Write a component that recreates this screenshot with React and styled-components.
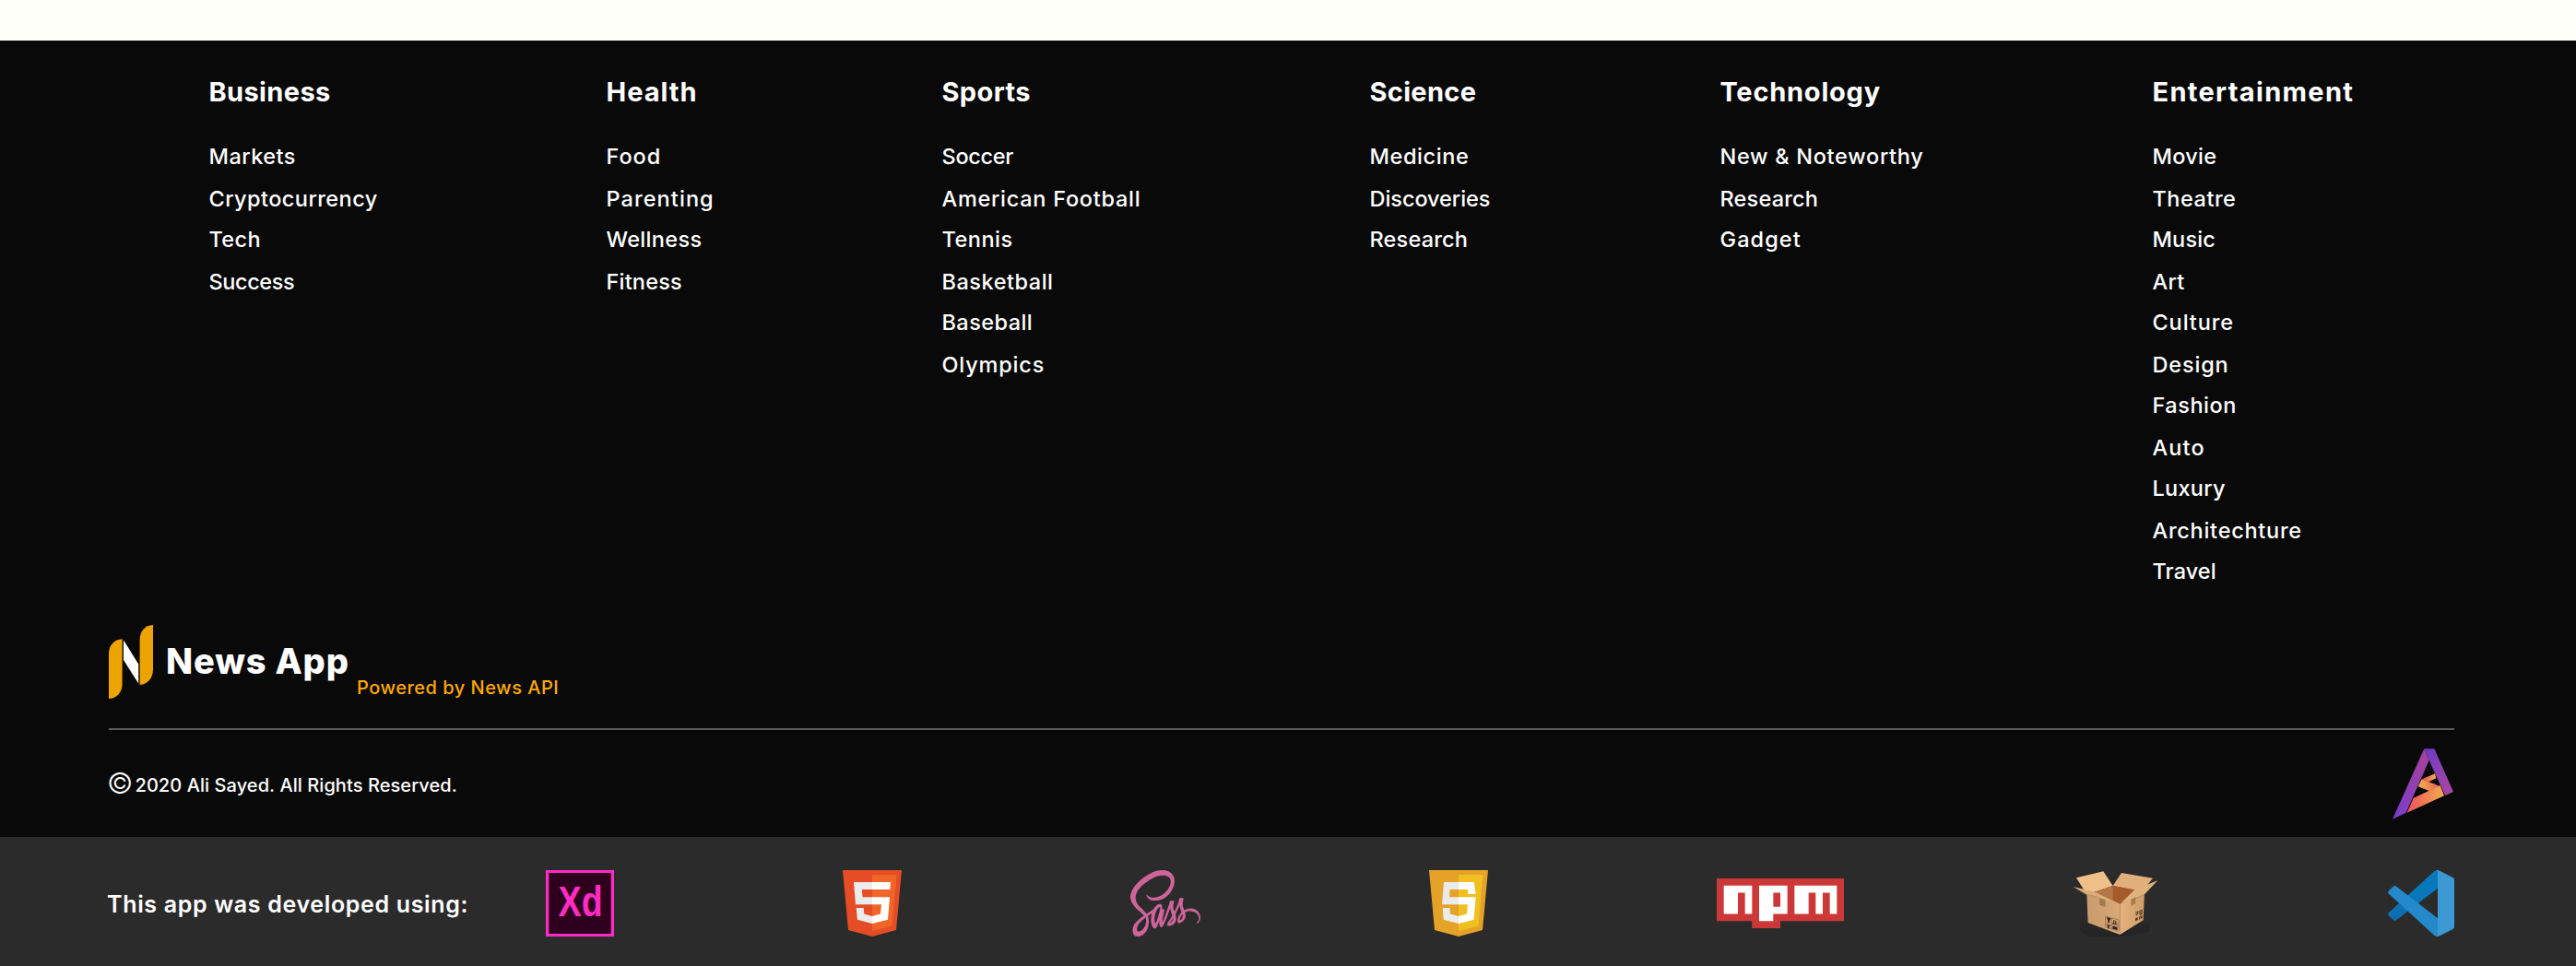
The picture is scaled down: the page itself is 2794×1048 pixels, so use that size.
import React from 'react';
import styled, { createGlobalStyle } from 'styled-components';
import { FaSass } from 'react-icons/fa';

const GlobalStyle = createGlobalStyle`
  * { box-sizing: border-box; }
  body { margin: 0; background: #fffef8; font-family: Inter, "Open Sans", sans-serif; color: #fff; }
  ul { list-style: none; margin: 0; padding: 0; }
`;

const Page = styled.div`
  min-height: 1048px;
  padding-top: 44px;
`;

const Footer = styled.footer`
  height: 864px;
  padding: 38px 132px 0 118px;
  background: #090909;
`;

const Columns = styled.nav`
  display: grid;
  grid-template-columns: 183px 116px 216px 132px 221px 220px;
  column-gap: 248px;
  height: 596px;
  padding-left: 108.5px;
`;

const Heading = styled.h3`
  margin: 0 0 37px;
  font-size: 29px;
  font-weight: 700;
  line-height: 36px;
  letter-spacing: ${(p) => p.$spacing}px;
  white-space: nowrap;
`;

const LinkItem = styled.li`
  height: 46px;
  font-size: 23.5px;
  font-weight: 500;
  line-height: 30px;
  letter-spacing: ${(p) => p.$spacing}px;
  white-space: nowrap;
  &:nth-child(even) { height: 44px; }
`;

const Brand = styled.div`
  display: flex;
  align-items: flex-start;
  height: 114px;
  border-bottom: 2px solid #5c5c5c;
`;

const BrandName = styled.span`
  flex: none;
  width: 207px;
  margin: 19px 0 0 14px;
  font-size: 38px;
  font-weight: 800;
  line-height: 40px;
  letter-spacing: 0.83px;
  white-space: nowrap;
`;

const Powered = styled.span`
  margin-top: 56px;
  color: #ffa900;
  font-size: 20px;
  font-weight: 500;
  line-height: 24px;
  letter-spacing: 0.5px;
`;

const Legal = styled.div`
  display: flex;
  align-items: center;
  justify-content: space-between;
  height: 116px;
`;

const Copyright = styled.p`
  display: flex;
  align-items: center;
  margin: 0 0 0 -2px;
  padding-top: 3px;
  font-size: 20px;
  font-weight: 500;
  line-height: 24px;
  letter-spacing: 0.07px;
`;

const CopyrightSign = styled.span`
  width: 30.5px;
  margin-top: -4px;
  font-size: 31px;
  font-weight: 300;
  line-height: 24px;
  letter-spacing: 0;
`;

const ToolBar = styled.section`
  display: flex;
  align-items: center;
  height: 140px;
  padding: 4px 132px 0 116px;
  background: #2b2b2b;
`;

const ToolLabel = styled.span`
  flex: none;
  width: 476px;
  padding-top: 2px;
  font-size: 25px;
  font-weight: 600;
  letter-spacing: 0.66px;
`;

const Tools = styled.div`
  display: flex;
  flex: 1;
  align-items: center;
  justify-content: space-between;
  svg { display: block; flex: none; }
`;

const SassLogo = styled(FaSass)`
  width: 76px;
  height: 72px;
  color: #cf649a;
`;

const columns = [
  ['Business', 0.37, [['Markets', 0.46], ['Cryptocurrency', 0.44], ['Tech', 0.36], ['Success', -0.4]]],
  ['Health', 1, [['Food', 0.95], ['Parenting', 1.08], ['Wellness', 0.33], ['Fitness', 0.19]]],
  ['Sports', 0.38, [['Soccer', -0.3], ['American Football', 0.72], ['Tennis', 0.51], ['Basketball', 0.52], ['Baseball', 0.43], ['Olympics', 0.82]]],
  ['Science', 0.32, [['Medicine', 0.58], ['Discoveries', -0.05], ['Research', 0.19]]],
  ['Technology', 0.76, [['New & Noteworthy', 0.7], ['Research', 0.19], ['Gadget', 1.08]]],
  ['Entertainment', 1.32, [['Movie', 0.26], ['Theatre', 0.52], ['Music', 0.15], ['Art', 0.34], ['Culture', 0.88], ['Design', 0.84], ['Fashion', 0.53], ['Auto', 1.16], ['Luxury', 0.28], ['Architechture', 0.74], ['Travel', 0.08]]],
];

const NewsLogo = () => (
  <svg width="48" height="80" viewBox="0 0 48 80">
    <path d="M0 31C0 22 6 15.5 14.6 15.2V64C14.6 73 8.5 80 0 80Z" fill="#eda400" />
    <path d="M33.6 16C33.6 7 39.5 .3 48 0V48C48 58 42 64.600 33.600 64.900Z" fill="#eda400" />
    <path d="M16 16.600L32.200 42.500V63.500L16 38Z" fill="#fff" />
  </svg>
);

const AuthorLogo = () => (
  <svg width="67" height="77" viewBox="102 97 201 231">
    <defs>
      <linearGradient id="legLeft" x1="0" y1="1" x2="0.6" y2="0"><stop stopColor="#763dca" /><stop offset="1" stopColor="#a242a0" /></linearGradient>
      <linearGradient id="legRight" x1="0" y1="0" x2="0.5" y2="1"><stop stopColor="#6a3cc4" /><stop offset="1" stopColor="#a544a6" /></linearGradient>
      <linearGradient id="swash"><stop stopColor="#f04f5c" /><stop offset="1" stopColor="#f0ad4e" /></linearGradient>
      <linearGradient id="swashBack"><stop stopColor="#edb24c" /><stop offset="1" stopColor="#f05c58" /></linearGradient>
    </defs>
    <path d="M205 98L221 135L146 306L102 327Z" fill="url(#legLeft)" />
    <path d="M205 98H238L300 238L273 250L221 135Z" fill="url(#legRight)" />
    <path d="M198 197L240 179L244 194L219 206Z" fill="url(#swash)" />
    <path d="M197 197L257 220L221 235L185 221Z" fill="url(#swashBack)" />
    <path d="M170 258L257 218L270 251L149 306Z" fill="url(#swash)" />
  </svg>
);

const XdLogo = () => (
  <svg width="74" height="72" viewBox="0 0 74 72">
    <rect width="74" height="72" fill="#ff2bc2" />
    <rect x="3.200" y="3" width="67.600" height="66" fill="#2e001e" />
    <text x="13.600" y="50.300" textLength="48" lengthAdjust="spacingAndGlyphs" fill="#ff2bc2" fontFamily="Liberation Sans, sans-serif" fontWeight="700" fontSize="46">Xd</text>
  </svg>
);

const Html5Logo = () => (
  <svg width="64" height="72" viewBox="0 0 64 72">
    <path d="M0 0H64L58 65L32 72L6 65Z" fill="#e44d26" />
    <path d="M32 5H58.500L53.500 60.500L32 66Z" fill="#f16529" />
    <path d="M12 13H32V21H20.800L21.500 29.300H32V37.300H14ZM14.700 41H22.700L23.200 47.500L32 50V58L16 53.700Z" fill="#ebebeb" />
    <path d="M32 13H52L51.300 21H32ZM32 29.300H51L49 53.700L32 58V50L41 47.500L42 37.300H32Z" fill="#fff" />
  </svg>
);

const JsLogo = () => (
  <svg width="64" height="72" viewBox="0 0 64 72">
    <path d="M0 0H64L58 65L32 72L6 65Z" fill="#e5a228" />
    <path d="M32 5H58.500L53.500 60.500L32 66Z" fill="#f0bf20" />
    <path d="M16 13H32V21H22.500L22.200 29.300H32V37.300H14ZM14.700 41H22.500L23 47.500L32 50V58L15.700 53.700Z" fill="#ebebeb" />
    <path d="M32 13H48.700L50.700 26H42V21H32ZM32 29.300H50.700L48.500 53.700L32 58V50L41 47.500L41.800 37.300H32Z" fill="#fff" />
  </svg>
);

const NpmLogo = () => (
  <svg width="138" height="54" viewBox="0 0 18 7" preserveAspectRatio="none">
    <path d="M0 0H18V6H9V7H5V6H0Z" fill="#cb3837" />
    <path d="M1 1H5V5H4V2H3V5H1ZM6 1H10V5H8V6H6ZM8 2V4H9V2ZM11 1H17V5H16V2H15V5H14V2H13V5H11Z" fill="#fff" fillRule="evenodd" />
  </svg>
);

const BoxLogo = () => (
  <svg width="94" height="72" viewBox="24 24 282 216">
    <defs>
      <linearGradient id="boxFront"><stop stopColor="#c99a6b" /><stop offset="1" stopColor="#d9a877" /></linearGradient>
      <linearGradient id="boxSide"><stop stopColor="#e3b280" /><stop offset="1" stopColor="#cf9c66" /></linearGradient>
      <linearGradient id="boxShadow" x1="0" y1="0" x2="0" y2="1"><stop stopColor="#232323" stopOpacity="0" /><stop offset="1" stopColor="#232323" /></linearGradient>
    </defs>
    <path d="M50 170H290L270 225L180 240H74L46 220Z" fill="url(#boxShadow)" />
    <path d="M36 49L124 28L155 75L94 96L62 90Z" fill="#f0c088" />
    <path d="M183 33L285 50L258 84L228 90L155 75Z" fill="#e0b07a" />
    <path d="M94 96L155 75L228 88L178 134Z" fill="#a55b2c" />
    <path d="M94 96L155 75V122Z" fill="#b57646" />
    <path d="M70 102L94 96L178 134V234L74 195Z" fill="url(#boxFront)" />
    <path d="M178 134L258 100L254 187L178 234Z" fill="url(#boxSide)" />
    <path d="M27 78L96 95L178 134L68 103Z" fill="#dcae7d" />
    <path d="M300 58L226 88L178 134L258 103Z" fill="#e2b27e" />
    <path d="M28 79L68 103L110 112M300 59L258 103L222 118" fill="none" stroke="#a37850" strokeWidth="1.500" />
    <path d="M111 114L130 120L131 144L112 138ZM214 119L229 112V133L214 140Z" fill="#a37d4f" />
    <path d="M134 177L149 181L144 190V196H139V188ZM157 186V196H153V199L170 202V199H166V188H163V197H160V186ZM135 201L147 204L143 209V215L138 213V207ZM154 208L158 206L170 211V219L154 215Z" fill="#33241a" />
    <path d="M131 174L174 186V223L131 209ZM151 180V216M131 199L174 207" fill="none" stroke="#6b4e36" strokeWidth="1.500" />
    <path d="M229 160L238 156V165L234 172L230 170ZM241 156L251 151V168L242 172ZM228 181L237 177V186L228 190ZM240 176L251 171V180L240 185Z" fill="#5d4026" />
    <path d="M233 160V168M246 156V166M244 178V182" stroke="#d4a26e" strokeWidth="2" />
  </svg>
);

const VsCodeLogo = () => (
  <svg width="72" height="72" viewBox="0 0 72 72">
    <defs>
      <linearGradient id="armDark" x1="0" y1="1" x2="1" y2="0"><stop stopColor="#126ab0" /><stop offset="0.500" stopColor="#0877b9" /><stop offset="1" stopColor="#0679bc" /></linearGradient>
    </defs>
    <path d="M50.500 .9Q52 0 54 0V19.800L9.300 54Q7.300 55.500 5.500 53.800L.8 49.500Q-.7 47.900 .8 46.300Z" fill="url(#armDark)" />
    <path d="M.8 25.600Q-.7 24 .8 22.400L5.500 18Q7.300 16.300 9.300 17.800L54 52.200V72Q52 72 50.500 71Z" fill="#2489ca" />
    <path d="M52.500 0H54.500L70.500 8Q72 8.700 72 10.400V61.600Q72 63.300 70.500 64L54.500 72H52.500Q54 71.500 54 69.800V2.200Q54 .5 52.500 0Z" fill="#3c99d4" />
  </svg>
);

export default function App() {
  return (
    <Page>
      <GlobalStyle />
      <Footer>
        <Columns>
          {columns.map(([title, spacing, links]) => (
            <div key={title}>
              <Heading $spacing={spacing}>{title}</Heading>
              <ul>
                {links.map(([label, s]) => <LinkItem key={label} $spacing={s}>{label}</LinkItem>)}
              </ul>
            </div>
          ))}
        </Columns>
        <Brand>
          <NewsLogo />
          <BrandName>News App</BrandName>
          <Powered>Powered by News API</Powered>
        </Brand>
        <Legal>
          <Copyright><CopyrightSign>©</CopyrightSign>2020 Ali Sayed. All Rights Reserved.</Copyright>
          <AuthorLogo />
        </Legal>
      </Footer>
      <ToolBar>
        <ToolLabel>This app was developed using:</ToolLabel>
        <Tools>
          <XdLogo />
          <Html5Logo />
          <SassLogo viewBox="0 16 640 480" preserveAspectRatio="none" />
          <JsLogo />
          <NpmLogo />
          <BoxLogo />
          <VsCodeLogo />
        </Tools>
      </ToolBar>
    </Page>
  );
}
